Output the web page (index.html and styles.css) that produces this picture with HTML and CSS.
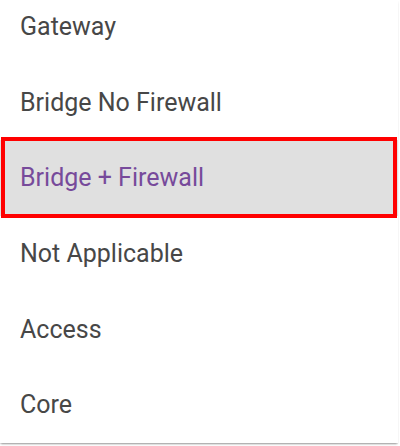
FILE: index.html
```html
<!DOCTYPE html>
<html>
<head>
<meta charset="utf-8">
<link rel="stylesheet" href="styles.css">
</head>
<body>
<div class="menu">
  <ul class="list">
    <li class="item">Gateway</li>
    <li class="item">Bridge No Firewall</li>
    <li class="item selected">Bridge + Firewall</li>
    <li class="item">Not Applicable</li>
    <li class="item">Access</li>
    <li class="item">Core</li>
  </ul>
</div>
</body>
</html>
```
FILE: styles.css
```css
html, body {
  margin: 0;
  padding: 0;
  background: #ffffff;
}
body {
  width: 400px;
  height: 446px;
  overflow: hidden;
}
.menu {
  width: 398px;
  height: 443px;
  background: #ffffff;
  overflow: hidden;
  box-shadow: 0 2px 2px -1px rgba(0,0,0,0.35), 0 1px 1px rgba(0,0,0,0.08);
}
.list {
  list-style: none;
  margin: -11px 0 0 0;
  padding: 0;
}
.item {
  position: relative;
  height: 75.6px;
  display: flex;
  align-items: center;
  padding-left: 20px;
  font-family: Roboto, "Liberation Sans", sans-serif;
  font-size: 25px;
  color: #474747;
}
.item.selected {
  background: #e0e0e0;
  color: #774a9b;
}
.item.selected::after {
  content: "";
  position: absolute;
  top: -3px;
  bottom: -2px;
  left: 1px;
  right: 1px;
  border: 4px solid #ff0000;
}
```
